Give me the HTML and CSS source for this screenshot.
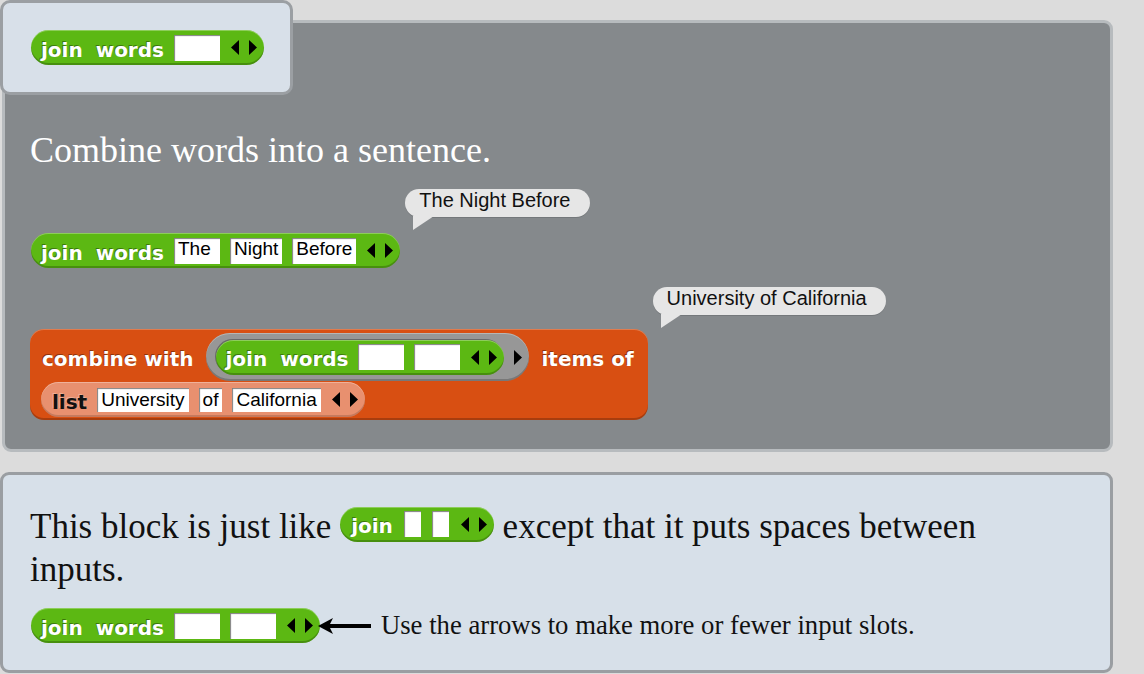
FILE: index.html
```html
<!DOCTYPE html>
<html lang="en">
<head>
<meta charset="utf-8">
<title>join words</title>
<link rel="stylesheet" href="styles.css">
</head>
<body>
<div class="page">
  <div class="spec">
    <span class="blk green">
      <span class="lbl">join words</span>
      <span class="slot"></span>
      <svg class="arrows" viewBox="0 0 26 15"><path d="M8 0L0 7.5L8 15Z M18 0L26 7.5L18 15Z"/></svg>
    </span>
  </div>

  <section class="panel">
    <p class="title">Combine words into a sentence.</p>

    <div class="ex ex1">
      <span class="blk green">
        <span class="lbl">join words</span>
        <span class="slot">The</span>
        <span class="slot">Night</span>
        <span class="slot">Before</span>
        <svg class="arrows" viewBox="0 0 26 15"><path d="M8 0L0 7.5L8 15Z M18 0L26 7.5L18 15Z"/></svg>
      </span>
      <div class="bubble">The Night Before</div>
    </div>

    <div class="ex ex2">
      <div class="rep">
        <div class="row">
          <span class="lbl">combine with</span>
          <span class="ring">
            <span class="blk green">
              <span class="lbl">join words</span>
              <span class="slot"></span>
              <span class="slot"></span>
              <svg class="arrows" viewBox="0 0 26 15"><path d="M8 0L0 7.5L8 15Z M18 0L26 7.5L18 15Z"/></svg>
            </span>
            <svg class="arrow1" viewBox="0 0 8 15"><path d="M0 0L8 7.5L0 15Z"/></svg>
          </span>
          <span class="lbl">items of</span>
        </div>
        <div class="row">
          <span class="blk zebra">
            <span class="lbl">list</span>
            <span class="slot slim">University</span>
            <span class="slot slim">of</span>
            <span class="slot slim">California</span>
            <svg class="arrows" viewBox="0 0 26 15"><path d="M8 0L0 7.5L8 15Z M18 0L26 7.5L18 15Z"/></svg>
          </span>
        </div>
      </div>
      <div class="bubble">University of California</div>
    </div>
  </section>

  <section class="help">
    <p class="desc"><span>This block is just like</span> <span class="blk green inline"><span class="lbl">join</span><span class="slot narrow"></span><span class="slot narrow"></span><svg class="arrows" viewBox="0 0 26 15"><path d="M8 0L0 7.5L8 15Z M18 0L26 7.5L18 15Z"/></svg></span> <span>except that it puts spaces between</span> <span>inputs.</span></p>
    <div class="note">
      <span class="blk green">
        <span class="lbl">join words</span>
        <span class="slot"></span>
        <span class="slot"></span>
        <svg class="arrows" viewBox="0 0 26 15"><path d="M8 0L0 7.5L8 15Z M18 0L26 7.5L18 15Z"/></svg>
      </span>
      <svg class="pointer" viewBox="0 0 53 16"><path d="M0 8L15 0L11 8L15 16Z"/><rect x="11" y="6" width="42" height="4"/></svg>
      <span class="note-text">Use the arrows to make more or fewer input slots.</span>
    </div>
  </section>
</div>
</body>
</html>
```

FILE: styles.css
```css
* {
  box-sizing: border-box;
}

html,
body {
  margin: 0;
}

body {
  width: 1144px;
  height: 674px;
  overflow: hidden;
  background: #dcdcdc;
  font-family: "Liberation Serif", "Times New Roman", serif;
}

.page {
  position: relative;
  padding-top: 20px;
}

/* ---------- spec box (overlays the panel corner) ---------- */
.spec {
  position: absolute;
  left: 0;
  top: 0;
  z-index: 2;
  width: 293px;
  height: 95px;
  padding: 27px 0 0 28px;
  background: #d8e0e9;
  border: 3px solid #9b9fa3;
  border-radius: 10px;
}

/* ---------- grey example panel ---------- */
.panel {
  margin-left: 2px;
  width: 1111px;
  padding: 106px 20px 29px 25px;
  background: #85898c;
  border: 3px solid #b7bbbe;
  border-radius: 9px;
}

.title {
  margin: 0;
  font-size: 36px;
  line-height: 42px;
  color: #fff;
}

.ex {
  display: flex;
  align-items: flex-start;
  padding-left: 1px;
}

.ex1 {
  margin-top: 18px;
}

.ex1 > .blk {
  margin-top: 44px;
}

.ex2 {
  margin-top: 19px;
  padding-left: 0;
}

.ex2 > .rep {
  margin-top: 42px;
}

/* ---------- speech bubble ---------- */
.bubble {
  position: relative;
  flex: none;
  margin-left: 5px;
  height: 28px;
  padding: 0 19px 0 14px;
  line-height: 28px;
  background: #e6e6e6;
  border-radius: 14px;
  box-shadow: 0 1px 0 rgba(0, 0, 0, 0.12);
  font: 20px "Liberation Sans", Arial, sans-serif;
  color: #111;
  white-space: nowrap;
}

.bubble::after {
  content: "";
  position: absolute;
  left: 8px;
  top: 27px;
  border-top: 14px solid #e6e6e6;
  border-right: 21px solid transparent;
}

/* ---------- blocks ---------- */
.blk {
  display: inline-flex;
  align-items: center;
  flex: none;
  gap: 10px;
  height: 35px;
  padding: 0 7px 0 10px;
  border-radius: 18px;
  font: bold 20px "DejaVu Sans", Verdana, sans-serif;
  color: #fff;
  white-space: nowrap;
}

.green {
  background: #5cb813;
  box-shadow: inset 0 1px 0 rgba(255, 255, 255, 0.3), inset 0 -2px 0 rgba(0, 0, 0, 0.22);
}

.lbl {
  padding-top: 4px;
  word-spacing: 6px;
  text-shadow: -1px -1px 0 rgba(0, 0, 0, 0.35);
}

.slot {
  display: inline-block;
  min-width: 46px;
  height: 26px;
  padding: 0 4px;
  line-height: 26px;
  background: #fff;
  box-shadow: inset 1px 1px 1px rgba(0, 0, 0, 0.5);
  font: 19px "Liberation Sans", Arial, sans-serif;
  color: #000;
  text-shadow: none;
}

.slot.narrow {
  min-width: 17px;
}

.slot.slim {
  min-width: 22px;
  height: 24px;
  line-height: 24px;
}

.arrows {
  flex: none;
  width: 26px;
  height: 15px;
  margin-left: 1px;
}

.arrow1 {
  flex: none;
  width: 8px;
  height: 15px;
}

/* ---------- orange reporter ---------- */
.rep {
  display: flex;
  flex-direction: column;
  flex: none;
  gap: 1px;
  padding: 4px 14px 3px 11px;
  background: #d84f12;
  border-radius: 14px;
  box-shadow: inset 0 1px 0 rgba(255, 255, 255, 0.25), inset 0 -2px 0 rgba(0, 0, 0, 0.22);
  font: bold 20px "DejaVu Sans", Verdana, sans-serif;
  color: #fff;
}

.row {
  display: flex;
  align-items: center;
  gap: 12px;
}

.row > .lbl {
  word-spacing: 0;
}

.row > .lbl:first-child {
  margin-left: 1px;
}

.ring {
  display: inline-flex;
  align-items: center;
  gap: 10px;
  height: 48px;
  padding: 0 7px 0 10px;
  background: #979797;
  border-radius: 24px;
  box-shadow: inset 0 1px 0 rgba(255, 255, 255, 0.3), inset 0 -2px 0 rgba(0, 0, 0, 0.2);
}

.ring .blk {
  box-shadow: inset 0 1px 0 rgba(255, 255, 255, 0.3), inset 0 -2px 0 rgba(0, 0, 0, 0.22), -1px -1px 0 rgba(0, 0, 0, 0.3);
}

.zebra {
  padding-left: 11px;
  background: #e8906f;
  color: #111;
  box-shadow: inset 0 1px 0 rgba(255, 255, 255, 0.3), inset 0 -2px 0 rgba(0, 0, 0, 0.15);
}

.zebra .lbl {
  text-shadow: -1px -1px 0 rgba(255, 255, 255, 0.3);
}

/* ---------- help box ---------- */
.help {
  margin-top: 20px;
  width: 1113px;
  height: 201px;
  padding: 30px 60px 0 27px;
  background: #d7e0e9;
  border: 3px solid #9a9ea2;
  border-radius: 9px;
}

.desc {
  margin: 0;
  font-size: 35px;
  line-height: 43px;
  color: #111;
}

.desc .inline {
  vertical-align: 5px;
  padding-left: 11px;
  gap: 11px;
}

.note {
  display: flex;
  align-items: center;
  margin-top: 17px;
  padding-left: 1px;
}

.pointer {
  flex: none;
  width: 53px;
  height: 16px;
  margin: 0 10px 0 -2px;
}

.note-text {
  font-size: 26.7px;
  color: #111;
}
```
